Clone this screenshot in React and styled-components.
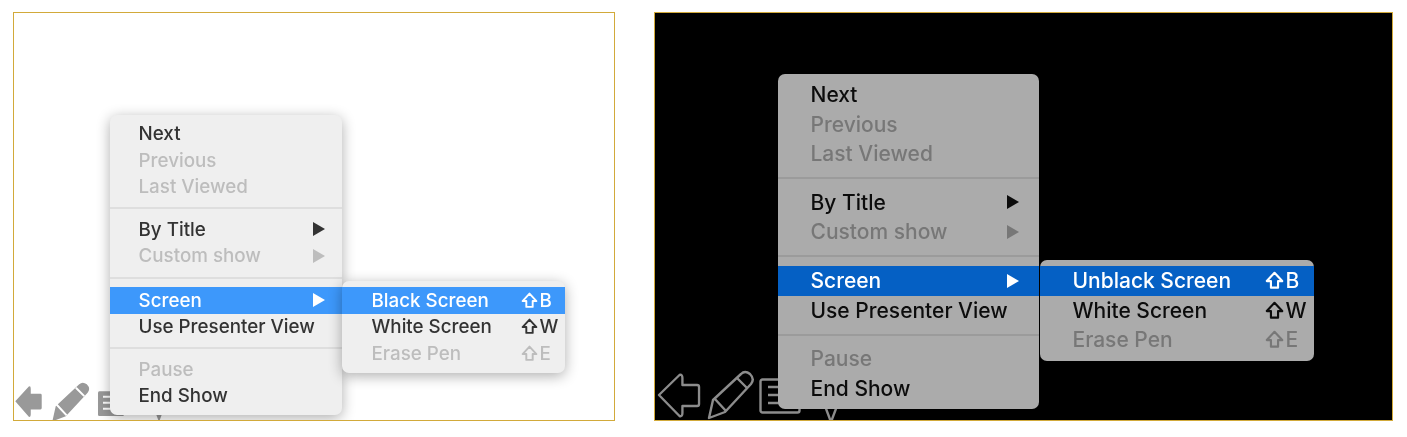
import React from 'react'
import styled, { createGlobalStyle, css } from 'styled-components'

const GlobalStyle = createGlobalStyle`
  html, body { margin: 0; background: #fff; }
  body { font-family: Inter, "Liberation Sans", sans-serif; }
`

const Page = styled.div`
  display: flex;
  gap: 39px;
  padding: 12px 0 0 13px;
  filter: blur(0.6px);
`

const Frame = styled.div`
  position: relative;
  box-sizing: border-box;
  width: ${p => (p.$dark ? 739 : 602)}px;
  height: 409px;
  display: flex;
  align-items: flex-end;
  overflow: hidden;
  border: 1.6px solid #d2aa3a;
  background: ${p => (p.$dark ? '#000' : '#fff')};
`

const Toolbar = styled.div`
  display: flex;
  align-items: flex-end;
  gap: ${p => (p.$dark ? 4 : 6)}px;
  padding-left: ${p => (p.$dark ? 2 : 0)}px;
`

const ToolIcon = styled.svg`
  flex: none;
  width: ${p => p.$w}px;
  height: ${p => p.$h}px;
  margin-bottom: ${p => p.$lift}px;
  margin-left: ${p => p.$shift || 0}px;
  fill: ${p => (p.$dark ? 'none' : '#999')};
  stroke: ${p => (p.$dark ? '#8c8c8c' : 'none')};
  stroke-width: 2.4;
  stroke-linejoin: round;
`

const ToolLine = styled.path`
  fill: none;
  stroke: ${p => (p.$dark ? '#8c8c8c' : '#fff')};
  stroke-width: 2.4;
`

const panel = css`
  position: absolute;
  box-sizing: border-box;
  border-radius: 7px;
  background: ${p => (p.$dark ? '#ababab' : '#efefef')};
  box-shadow: ${p => (p.$dark ? 'none' : '0 3px 14px rgba(0, 0, 0, 0.32)')};
  top: ${p => p.$top}px;
  left: ${p => p.$left}px;
  width: ${p => p.$width}px;
`

const Menu = styled.div`
  ${panel}
  padding: ${p => (p.$dark ? 6 : 5.5)}px 0 6px;
`

const Submenu = styled.div`
  ${panel}
  padding: 6px 0;
`

const Row = styled.div`
  box-sizing: border-box;
  display: flex;
  align-items: center;
  justify-content: space-between;
  height: ${p => (p.$dark ? 29.5 : 26.5)}px;
  padding-left: ${p => p.$indent}px;
  padding-right: ${p => p.$trail}px;
  font-size: ${p => (p.$dark ? 21 : 18.8)}px;
  font-weight: 450;
  color: ${p => {
    if (p.$active) return '#fff'
    if (p.$off) return p.$dark ? '#777' : '#bdbdbd'
    return p.$dark ? '#0c0c0c' : '#333'
  }};
  background: ${p => {
    if (!p.$active) return 'transparent'
    return p.$dark ? '#0560c4' : '#3d98fb'
  }};
`

const Separator = styled.div`
  height: 2px;
  margin: ${p => {
    if (p.$dark) return p.$wide ? 8.75 : 8.5
    return p.$wide ? 8 : 7
  }}px 0;
  background: ${p => (p.$dark ? '#9b9b9b' : '#dedede')};
`

const Arrow = styled.span`
  width: 0;
  height: 0;
  border-style: solid;
  border-width: 7px 0 7px 12px;
  border-color: transparent transparent transparent currentColor;
`

const Shortcut = styled.span`
  display: flex;
  align-items: center;
  width: ${p => (p.$dark ? 43 : 38)}px;
  gap: 2px;
`

const ShiftIcon = styled.svg`
  flex: none;
  width: ${p => (p.$dark ? 19 : 17)}px;
  height: ${p => (p.$dark ? 19 : 17)}px;
  fill: none;
  stroke: currentColor;
  stroke-width: 1.8;
  stroke-linejoin: round;
`

const mainItems = [
  [{ label: 'Next' }, { label: 'Previous', off: true }, { label: 'Last Viewed', off: true }],
  [{ label: 'By Title', more: true }, { label: 'Custom show', more: true, off: true }],
  [{ label: 'Screen', more: true, active: true }, { label: 'Use Presenter View' }],
  [{ label: 'Pause', off: true }, { label: 'End Show' }],
]

const BackIcon = ({ dark }) => (
  <ToolIcon $dark={dark} $w={dark ? 44 : 29} $h={dark ? 46 : 34} $lift={1} viewBox="0 0 45 46" preserveAspectRatio="none">
    <path d="M2 22 L23 2 Q26 1 26 5 V12 H41 Q43 12 43 14 V31 Q43 33 41 33 H26 V40 Q26 44 23 43 Z" />
  </ToolIcon>
)

const PenIcon = ({ dark }) => (
  <ToolIcon $dark={dark} $w={dark ? 50 : 42} $h={dark ? 50 : 42} $lift={dark ? 0 : -3} viewBox="0 0 50 50">
    <path d="M4 48 L8 30 L36 4 Q40 0 45 4 Q50 9 46 14 L20 42 Z" />
    <ToolLine $dark={dark} d="M32 8 L42 18 M9 28 L21 41" />
  </ToolIcon>
)

const NotesIcon = ({ dark }) => (
  <ToolIcon $dark={dark} $w={dark ? 42 : 28} $h={dark ? 36 : 27} $lift={dark ? 6 : 3} viewBox="0 0 42 36" preserveAspectRatio="none">
    <rect x="1.5" y="1.5" width="39" height="33" rx="2" />
    <ToolLine $dark={dark} d="M9 9 H28 M9 17 H28 M9 25 H28" />
  </ToolIcon>
)

const PointerIcon = ({ dark }) => (
  <ToolIcon $dark={dark} $shift={dark ? 18 : 20} $w={16} $h={22} $lift={-4} viewBox="0 0 16 22">
    <path d="M2 4 L14 4 L8 20 Z" />
  </ToolIcon>
)

const Tools = ({ dark }) => (
  <Toolbar $dark={dark}>
    <BackIcon dark={dark} />
    <PenIcon dark={dark} />
    <NotesIcon dark={dark} />
    <PointerIcon dark={dark} />
  </Toolbar>
)

const Shift = ({ dark, letter }) => (
  <Shortcut $dark={dark}>
    <ShiftIcon $dark={dark} viewBox="0 0 16 16">
      <path d="M8 1.5 L14.5 8.5 H11 V14 H5 V8.5 H1.5 Z" />
    </ShiftIcon>
    {letter}
  </Shortcut>
)

const Screen = ({ dark, menu, sub, firstLabel }) => (
  <Frame $dark={dark}>
    <Tools dark={dark} />
    <Menu $dark={dark} {...menu}>
      {mainItems.map((group, i) => (
        <React.Fragment key={i}>
          {i > 0 && <Separator $dark={dark} $wide={i === 2} />}
          {group.map(item => (
            <Row key={item.label} $dark={dark} $indent={dark ? 33 : 29} $trail={dark ? 20 : 17} $off={item.off} $active={item.active}>
              {item.label}
              {item.more && <Arrow />}
            </Row>
          ))}
        </React.Fragment>
      ))}
    </Menu>
    <Submenu $dark={dark} {...sub}>
      <Row $dark={dark} $active $indent={dark ? 33 : 30} $trail={6}>
        {firstLabel}
        <Shift dark={dark} letter="B" />
      </Row>
      <Row $dark={dark} $indent={dark ? 33 : 30} $trail={6}>
        White Screen
        <Shift dark={dark} letter="W" />
      </Row>
      <Row $dark={dark} $off $indent={dark ? 33 : 30} $trail={6}>
        Erase Pen
        <Shift dark={dark} letter="E" />
      </Row>
    </Submenu>
  </Frame>
)

export default function App() {
  return (
    <Page>
      <GlobalStyle />
      <Screen
        menu={{ $top: 102, $left: 95.5, $width: 232 }}
        sub={{ $top: 268, $left: 327.5, $width: 223 }}
        firstLabel="Black Screen"
      />
      <Screen
        dark
        menu={{ $top: 61, $left: 122.5, $width: 261 }}
        sub={{ $top: 247, $left: 384.5, $width: 274 }}
        firstLabel="Unblack Screen"
      />
    </Page>
  )
}
